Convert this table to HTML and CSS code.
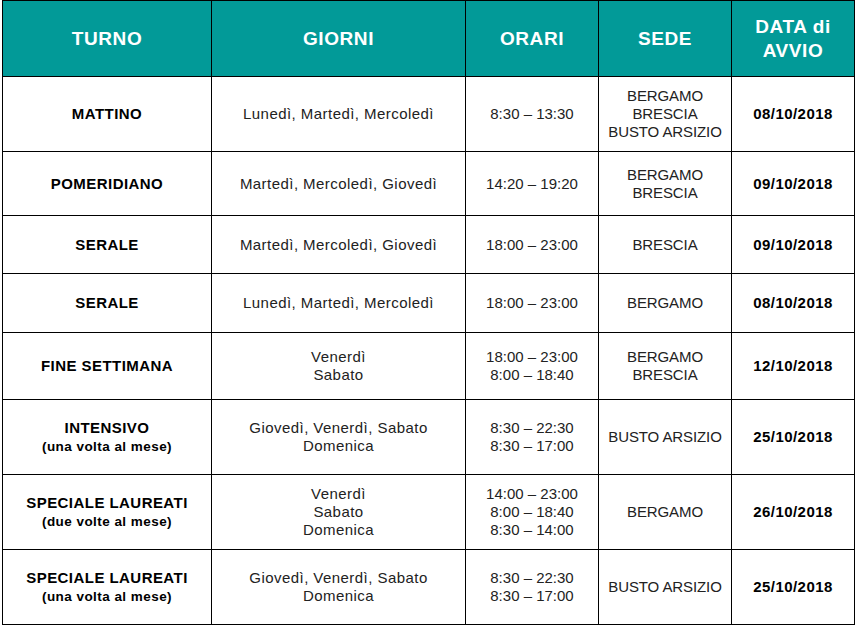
FILE: index.html
```html
<!DOCTYPE html>
<html lang="it">
<head>
<meta charset="utf-8">
<link rel="stylesheet" href="styles.css">
</head>
<body>
<table class="orari">
  <colgroup>
    <col class="c-turno"><col class="c-giorni"><col class="c-orari"><col class="c-sede"><col class="c-data">
  </colgroup>
  <thead>
    <tr class="r-head">
      <th>TURNO</th><th>GIORNI</th><th>ORARI</th><th>SEDE</th><th>DATA di<br>AVVIO</th>
    </tr>
  </thead>
  <tbody>
    <tr class="r1">
      <td class="turno">MATTINO</td>
      <td>Lunedì, Martedì, Mercoledì</td>
      <td class="ora">8:30 – 13:30</td>
      <td class="sede">BERGAMO<br>BRESCIA<br>BUSTO ARSIZIO</td>
      <td class="data">08/10/2018</td>
    </tr>
    <tr class="r2">
      <td class="turno">POMERIDIANO</td>
      <td>Martedì, Mercoledì, Giovedì</td>
      <td class="ora">14:20 – 19:20</td>
      <td class="sede">BERGAMO<br>BRESCIA</td>
      <td class="data">09/10/2018</td>
    </tr>
    <tr class="r3">
      <td class="turno">SERALE</td>
      <td>Martedì, Mercoledì, Giovedì</td>
      <td class="ora">18:00 – 23:00</td>
      <td class="sede">BRESCIA</td>
      <td class="data">09/10/2018</td>
    </tr>
    <tr class="r4">
      <td class="turno">SERALE</td>
      <td>Lunedì, Martedì, Mercoledì</td>
      <td class="ora">18:00 – 23:00</td>
      <td class="sede">BERGAMO</td>
      <td class="data">08/10/2018</td>
    </tr>
    <tr class="r5">
      <td class="turno">FINE SETTIMANA</td>
      <td>Venerdì<br>Sabato</td>
      <td class="ora">18:00 – 23:00<br>8:00 – 18:40</td>
      <td class="sede">BERGAMO<br>BRESCIA</td>
      <td class="data">12/10/2018</td>
    </tr>
    <tr class="r6">
      <td class="turno">INTENSIVO<br><span class="sub">(una volta al mese)</span></td>
      <td>Giovedì, Venerdì, Sabato<br>Domenica</td>
      <td class="ora">8:30 – 22:30<br>8:30 – 17:00</td>
      <td class="sede">BUSTO ARSIZIO</td>
      <td class="data">25/10/2018</td>
    </tr>
    <tr class="r7">
      <td class="turno">SPECIALE LAUREATI<br><span class="sub">(due volte al mese)</span></td>
      <td>Venerdì<br>Sabato<br>Domenica</td>
      <td class="ora">14:00 – 23:00<br>8:00 – 18:40<br>8:30 – 14:00</td>
      <td class="sede">BERGAMO</td>
      <td class="data">26/10/2018</td>
    </tr>
    <tr class="r8">
      <td class="turno">SPECIALE LAUREATI<br><span class="sub">(una volta al mese)</span></td>
      <td>Giovedì, Venerdì, Sabato<br>Domenica</td>
      <td class="ora">8:30 – 22:30<br>8:30 – 17:00</td>
      <td class="sede">BUSTO ARSIZIO</td>
      <td class="data">25/10/2018</td>
    </tr>
  </tbody>
</table>
</body>
</html>
```

FILE: styles.css
```css
html, body {
  margin: 0;
  padding: 0;
  background: #ffffff;
}
body {
  padding: 0 0 0 2px;
  font-family: "Liberation Sans", Arial, sans-serif;
  color: #222222;
}
.orari {
  border-collapse: collapse;
  table-layout: fixed;
  width: 852px;
}
.c-turno { width: 209px; }
.c-giorni { width: 254px; }
.c-orari { width: 133px; }
.c-sede { width: 133px; }
.c-data { width: 123px; }
.orari th, .orari td {
  border: 1px solid #000;
  padding: 0 2px;
  text-align: center;
  vertical-align: middle;
}
.orari th {
  background: #029a98;
  color: #ffffff;
  font-size: 19px;
  font-weight: 700;
  line-height: 24px;
  letter-spacing: 0.6px;
  height: 76px;
  box-sizing: border-box;
}
.orari td {
  font-size: 15px;
  line-height: 18px;
  letter-spacing: 0.45px;
  box-sizing: border-box;
}
.orari td.ora {
  letter-spacing: 0;
}
.orari td.sede {
  letter-spacing: -0.1px;
}
.orari td.turno, .orari td.data {
  font-weight: 700;
  color: #000;
  letter-spacing: 0.45px;
}
.sub {
  font-size: 13.5px;
  letter-spacing: 0.45px;
}
.r1 td { height: 75px; }
.r2 td { height: 64px; }
.r3 td { height: 58px; }
.r4 td { height: 59px; }
.r5 td { height: 67px; }
.r6 td { height: 75px; }
.r7 td { height: 75px; }
.r8 td { height: 75px; }
```
